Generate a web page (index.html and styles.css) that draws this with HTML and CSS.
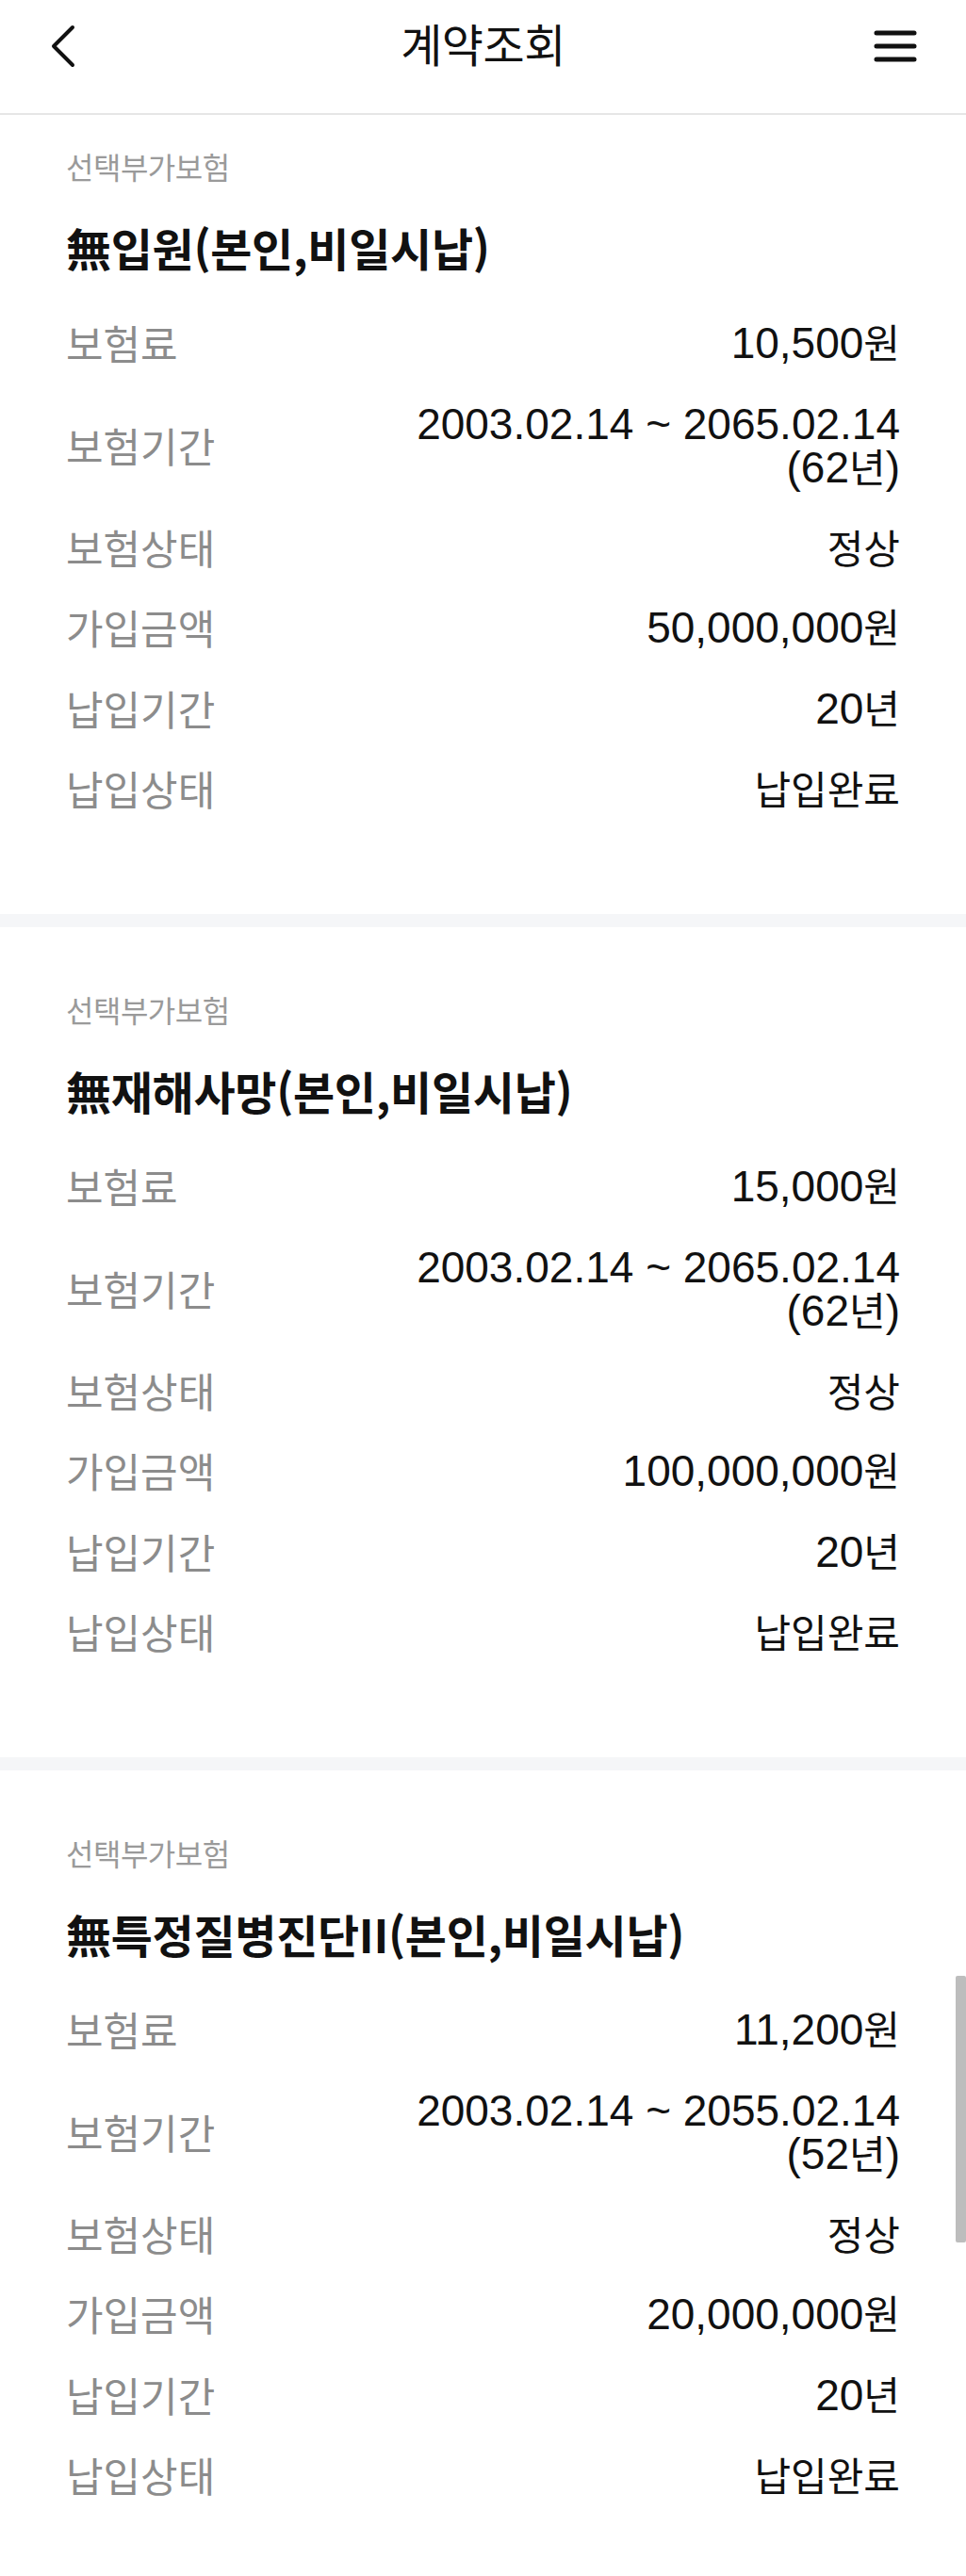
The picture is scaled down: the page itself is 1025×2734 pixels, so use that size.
FILE: index.html
```html
<!DOCTYPE html>
<html lang="ko">
<head>
<meta charset="utf-8">
<title>계약조회</title>
<link rel="stylesheet" href="styles.css">
</head>
<body>
<div class="page">
  <header class="topbar">
    <div class="topbar__row">
      <button class="icon-btn icon-btn--back" aria-label="뒤로">
        <svg width="26" height="46" viewBox="0 0 26 46"><polyline points="23,3 3,23 23,43" fill="none" stroke="#111" stroke-width="4" stroke-linecap="round" stroke-linejoin="round"/></svg>
      </button>
      <h1 class="topbar__title">계약조회</h1>
      <button class="icon-btn icon-btn--menu" aria-label="메뉴">
        <svg width="46" height="34" viewBox="0 0 46 34"><g stroke="#111" stroke-width="5" stroke-linecap="round"><line x1="3" y1="3" x2="43" y2="3"/><line x1="3" y1="17" x2="43" y2="17"/><line x1="3" y1="31" x2="43" y2="31"/></g></svg>
      </button>
    </div>
  </header>

  <main class="content">
    <section class="rider rider--first">
      <p class="rider__type">선택부가보험</p>
      <h2 class="rider__name">無입원(본인,비일시납)</h2>
      <dl class="rider__info">
        <div class="info-row"><dt>보험료</dt><dd><span class="num">10,500</span>원</dd></div>
        <div class="info-row"><dt>보험기간</dt><dd><span class="num">2003.02.14 ~ 2065.02.14</span><br><span class="num">(62</span>년<span class="num">)</span></dd></div>
        <div class="info-row"><dt>보험상태</dt><dd>정상</dd></div>
        <div class="info-row"><dt>가입금액</dt><dd><span class="num">50,000,000</span>원</dd></div>
        <div class="info-row"><dt>납입기간</dt><dd><span class="num">20</span>년</dd></div>
        <div class="info-row"><dt>납입상태</dt><dd>납입완료</dd></div>
      </dl>
    </section>

    <section class="rider">
      <p class="rider__type">선택부가보험</p>
      <h2 class="rider__name">無재해사망(본인,비일시납)</h2>
      <dl class="rider__info">
        <div class="info-row"><dt>보험료</dt><dd><span class="num">15,000</span>원</dd></div>
        <div class="info-row"><dt>보험기간</dt><dd><span class="num">2003.02.14 ~ 2065.02.14</span><br><span class="num">(62</span>년<span class="num">)</span></dd></div>
        <div class="info-row"><dt>보험상태</dt><dd>정상</dd></div>
        <div class="info-row"><dt>가입금액</dt><dd><span class="num">100,000,000</span>원</dd></div>
        <div class="info-row"><dt>납입기간</dt><dd><span class="num">20</span>년</dd></div>
        <div class="info-row"><dt>납입상태</dt><dd>납입완료</dd></div>
      </dl>
    </section>

    <section class="rider rider--last">
      <p class="rider__type">선택부가보험</p>
      <h2 class="rider__name">無특정질병진단II(본인,비일시납)</h2>
      <dl class="rider__info">
        <div class="info-row"><dt>보험료</dt><dd><span class="num">11,200</span>원</dd></div>
        <div class="info-row"><dt>보험기간</dt><dd><span class="num">2003.02.14 ~ 2055.02.14</span><br><span class="num">(52</span>년<span class="num">)</span></dd></div>
        <div class="info-row"><dt>보험상태</dt><dd>정상</dd></div>
        <div class="info-row"><dt>가입금액</dt><dd><span class="num">20,000,000</span>원</dd></div>
        <div class="info-row"><dt>납입기간</dt><dd><span class="num">20</span>년</dd></div>
        <div class="info-row"><dt>납입상태</dt><dd>납입완료</dd></div>
      </dl>
    </section>
  </main>

  <div class="scroll-thumb"></div>
</div>
</body>
</html>
```

FILE: styles.css
```css
* {
  box-sizing: border-box;
}

html, body {
  margin: 0;
  padding: 0;
  background: #ffffff;
}

body {
  font-family: "Noto Sans CJK KR", "Noto Sans", sans-serif;
  color: #111111;
}

.page {
  position: relative;
  width: 1025px;
}

/* Top bar */
.topbar {
  padding-bottom: 22px;
  border-bottom: 2px solid #e6e6e6;
  background: #ffffff;
}

.topbar__row {
  height: 98px;
  display: grid;
  grid-template-columns: 1fr auto 1fr;
  align-items: center;
}

.topbar__title {
  margin: -8px 0 0;
  font-size: 48px;
  font-weight: 400;
  line-height: 60px;
  letter-spacing: -0.5px;
  color: #111111;
}

.icon-btn {
  border: 0;
  padding: 0;
  background: transparent;
  display: flex;
  align-items: center;
}

.icon-btn svg {
  display: block;
}

.icon-btn--back {
  justify-self: start;
  margin-left: 54px;
}

.icon-btn--menu {
  justify-self: end;
  margin-right: 52px;
}

/* Rider sections */
.rider {
  padding: 67px 70px 92px;
}

.rider + .rider {
  border-top: 14px solid #f5f6f8;
}

.rider--first {
  padding-top: 34px;
}

.rider--last {
  padding-bottom: 30px;
}

.rider__type {
  margin: 0 0 36px;
  font-size: 32px;
  line-height: 40px;
  font-weight: 400;
  color: #9a9a9a;
  letter-spacing: -0.5px;
}

.rider__name {
  margin: 0 0 28px;
  font-size: 48px;
  line-height: 60px;
  font-weight: 700;
  color: #111111;
  letter-spacing: -0.3px;
}

.rider__info {
  margin: 0;
}

.info-row {
  display: flex;
  justify-content: space-between;
  align-items: center;
  padding: 20px 0;
}

.info-row dt {
  font-size: 43px;
  line-height: 44px;
  color: #8c8c8c;
  white-space: nowrap;
}

.info-row dd {
  margin: 0;
  font-size: 42px;
  line-height: 44px;
  color: #111111;
  text-align: right;
  white-space: nowrap;
}

.num {
  font-family: "Liberation Sans", Arial, sans-serif;
  font-size: 46px;
  line-height: 44px;
}

/* Overlay scroll indicator */
.scroll-thumb {
  position: absolute;
  top: 2097px;
  right: 0;
  width: 11px;
  height: 283px;
  background: #bdbdbd;
  border-radius: 2px;
}
```
